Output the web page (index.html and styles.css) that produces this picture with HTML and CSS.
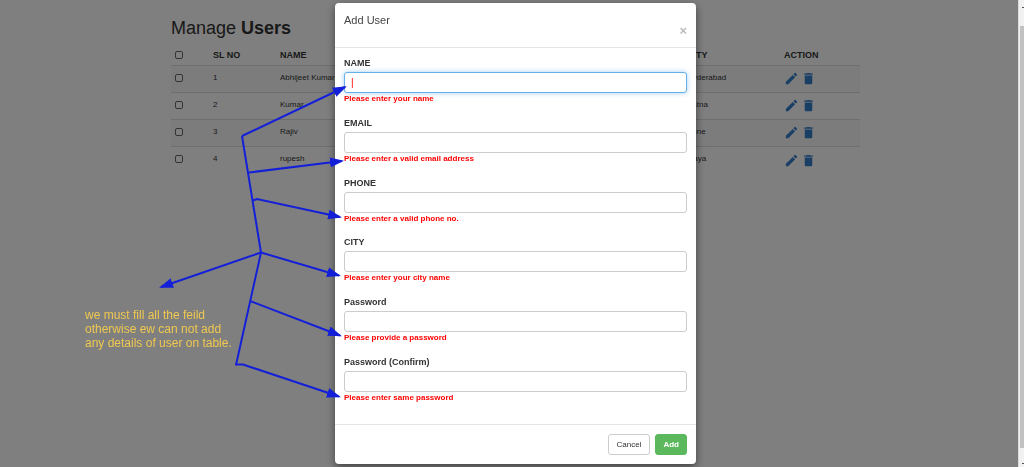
FILE: index.html
```html
<!DOCTYPE html>
<html lang="en">
<head>
<meta charset="utf-8">
<title>Manage Users</title>
<link rel="stylesheet" href="styles.css">
</head>
<body>
<svg class="sprite" aria-hidden="true">
  <symbol id="pencil" viewBox="0 0 24 24"><path d="M3 17.2V21h3.800L17.800 9.900l-3.700-3.700zM20.700 7a1 1 0 0 0 0-1.400l-2.300-2.300a1 1 0 0 0-1.400 0l-1.900 1.900 3.700 3.700z"/></symbol>
  <symbol id="trash" viewBox="0 0 24 24"><path d="M6 19c0 1.100.900 2 2 2h8a2 2 0 0 0 2-2V7H6zM19 4h-3.500l-1-1h-5l-1 1H5v2h14z"/></symbol>
</svg>

<main class="page">
  <h1 class="title">Manage <b>Users</b></h1>
  <table class="users">
    <colgroup><col class="col-check"><col class="col-no"><col class="col-name"><col class="col-city"><col class="col-action"></colgroup>
    <thead>
      <tr><th><input type="checkbox" aria-label="Select all"></th><th>SL NO</th><th>NAME</th><th>CITY</th><th>ACTION</th></tr>
    </thead>
    <tbody>
      <tr><td><input type="checkbox" aria-label="Select user 1"></td><td>1</td><td>Abhijeet Kumar</td><td>Hyderabad</td><td><div class="actions"><a href="#" aria-label="Edit"><svg><use href="#pencil"/></svg></a><a href="#" aria-label="Delete"><svg><use href="#trash"/></svg></a></div></td></tr>
      <tr><td><input type="checkbox" aria-label="Select user 2"></td><td>2</td><td>Kumar</td><td>Patna</td><td><div class="actions"><a href="#" aria-label="Edit"><svg><use href="#pencil"/></svg></a><a href="#" aria-label="Delete"><svg><use href="#trash"/></svg></a></div></td></tr>
      <tr><td><input type="checkbox" aria-label="Select user 3"></td><td>3</td><td>Rajiv</td><td>Pune</td><td><div class="actions"><a href="#" aria-label="Edit"><svg><use href="#pencil"/></svg></a><a href="#" aria-label="Delete"><svg><use href="#trash"/></svg></a></div></td></tr>
      <tr><td><input type="checkbox" aria-label="Select user 4"></td><td>4</td><td>rupesh</td><td>Gaya</td><td><div class="actions"><a href="#" aria-label="Edit"><svg><use href="#pencil"/></svg></a><a href="#" aria-label="Delete"><svg><use href="#trash"/></svg></a></div></td></tr>
    </tbody>
  </table>
</main>

<div class="backdrop">
  <form class="modal" role="dialog" aria-labelledby="modal-title">
    <header class="modal-header">
      <h2 class="modal-title" id="modal-title">Add User</h2>
      <button class="close" type="button" aria-label="Close">×</button>
    </header>
    <div class="modal-body">
      <div class="field"><label for="name">NAME</label><input class="focused" id="name" type="text" value="|"><p class="error">Please enter your name</p></div>
      <div class="field"><label for="email">EMAIL</label><input id="email" type="email"><p class="error">Please enter a valid email address</p></div>
      <div class="field"><label for="phone">PHONE</label><input id="phone" type="tel"><p class="error">Please enter a valid phone no.</p></div>
      <div class="field"><label for="city">CITY</label><input id="city" type="text"><p class="error">Please enter your city name</p></div>
      <div class="field"><label for="password">Password</label><input id="password" type="password"><p class="error">Please provide a password</p></div>
      <div class="field"><label for="confirm">Password (Confirm)</label><input id="confirm" type="password"><p class="error">Please enter same password</p></div>
    </div>
    <footer class="modal-footer">
      <button class="btn" type="button">Cancel</button>
      <button class="btn btn-add" type="submit">Add</button>
    </footer>
  </form>
</div>

<div class="scrollbar" aria-hidden="true"><span class="tick"></span><div class="thumb"></div><span class="tick"></span></div>

<svg class="arrows" width="1024" height="467" viewBox="0 0 1024 467" aria-hidden="true">
  <defs>
    <marker id="head" markerUnits="userSpaceOnUse" markerWidth="14" markerHeight="10" refX="12" refY="5" orient="auto"><path d="M0 0L14 5L0 10z"/></marker>
  </defs>
  <path d="M242 136L345 87"/>
  <path d="M249 172.500L342 161"/>
  <path d="M253 200.500L257 199L340 217"/>
  <path d="M261 252.500L339 275.500"/>
  <path d="M250 301L340 335.500"/>
  <path d="M235 364.500H243L339 396.500"/>
  <path d="M261 252.500L161 287"/>
  <path class="stem" d="M242 136L261 252.500L236 365"/>
</svg>
<p class="note">we must fill all the feild<br>otherwise ew can not add<br>any details of user on table.</p>
</body>
</html>
```
FILE: styles.css
```css
* { box-sizing: border-box; }
body {
  margin: 0;
  min-height: 100vh;
  overflow: hidden;
  background: #fff;
  color: #333;
  font: 8px/12px "Liberation Sans", Arial, sans-serif;
}
h1, h2, p { margin: 0; }
input, button { font: inherit; }
.sprite { position: absolute; width: 0; height: 0; }

.page { padding: 16px 164px 0 171px; }
.title { font-size: 18px; line-height: 24px; font-weight: 400; }
.users {
  width: 100%;
  margin-top: 4px;
  border-collapse: separate;
  border-spacing: 0;
  table-layout: fixed;
}
.users th, .users td { padding: 0 4px; text-align: left; }
.users th { height: 22px; font-size: 9px; border-bottom: 1px solid #ddd; }
.users td { height: 27px; padding-bottom: 3px; border-bottom: 1px solid #ddd; }
.users tr:last-child td { border-bottom: 0; }
.users tbody tr:nth-child(odd) { background: #f9f9f9; }
.users tbody tr:nth-child(even) { background: #fff; }
.users input {
  appearance: none;
  display: block;
  width: 8px;
  height: 8px;
  margin: 0;
  border: 1px solid #666;
  border-radius: 2px;
  background: #fff;
}
.col-check { width: 38px; }
.col-no { width: 67px; }
.col-city { width: 97px; }
.col-action { width: 80px; }
.actions { display: flex; gap: 2px; padding-top: 2px; }
.actions a { display: block; width: 15px; height: 15px; color: #337fca; }
.actions svg { display: block; width: 15px; height: 15px; fill: currentColor; }

.backdrop {
  position: fixed;
  inset: 0 6px 0 0;
  display: flex;
  justify-content: center;
  padding: 3px 0 3px 13px;
  background: rgba(0, 0, 0, .5);
}
.modal {
  display: flex;
  flex-direction: column;
  width: 361px;
  background: #fff;
  border-radius: 4px;
  box-shadow: 0 3px 9px rgba(0, 0, 0, .5);
}
.modal-header {
  display: flex;
  flex-direction: column;
  height: 45px;
  padding: 10px 9px 0;
  border-bottom: 1px solid #e5e5e5;
}
.modal-title { font-size: 11px; line-height: 14px; font-weight: 400; color: #444; }
.close {
  align-self: flex-end;
  padding: 0;
  border: 0;
  background: none;
  font-size: 13px;
  line-height: 8px;
  font-weight: 700;
  color: #bbb;
}
.modal-body {
  flex: 1;
  display: flex;
  flex-direction: column;
  justify-content: space-between;
  padding: 9px 9px 20px;
}
.field label { display: block; padding-bottom: 3px; font-size: 9px; font-weight: 700; }
.field input {
  display: block;
  width: 100%;
  height: 21px;
  padding: 0 6px;
  border: 1px solid #ccc;
  border-radius: 3px;
  background: #fff;
  color: #f00;
  font-size: 10px;
}
.field .focused { border-color: #66afe9; box-shadow: 0 0 5px rgba(102, 175, 233, .6); }
.error { color: #f00; font-weight: 700; }
.modal-footer {
  display: flex;
  justify-content: flex-end;
  gap: 5px;
  padding: 9px;
  border-top: 1px solid #e5e5e5;
}
.btn {
  height: 21px;
  padding: 0 8px;
  border: 1px solid #ccc;
  border-radius: 3px;
  background: #fff;
  color: #333;
}
.btn-add { padding: 0 7px; border-color: #5cb85c; background: #5cb85c; color: #fff; font-weight: 700; }

.scrollbar {
  position: fixed;
  inset: 0 0 0 auto;
  display: flex;
  flex-direction: column;
  align-items: flex-end;
  justify-content: space-between;
  width: 6px;
  padding: 7px 0 3px;
  background: #f1f1f1;
  border-left: 1px solid #ddd;
}
.tick { width: 2px; height: 1px; background: #555; }
.thumb { flex: 1; width: 4px; margin: 18px 0 15px; background: #c1c1c1; }

.arrows { position: absolute; top: 0; left: 0; fill: none; stroke: #1420d8; stroke-width: 2; }
.arrows path { marker-end: url(#head); }
.arrows .stem { marker-end: none; }
.arrows marker path { fill: #1420d8; stroke: none; marker-end: none; }
.note { position: absolute; top: 308px; left: 85px; color: #f0c850; font-size: 12px; line-height: 14px; }
```
